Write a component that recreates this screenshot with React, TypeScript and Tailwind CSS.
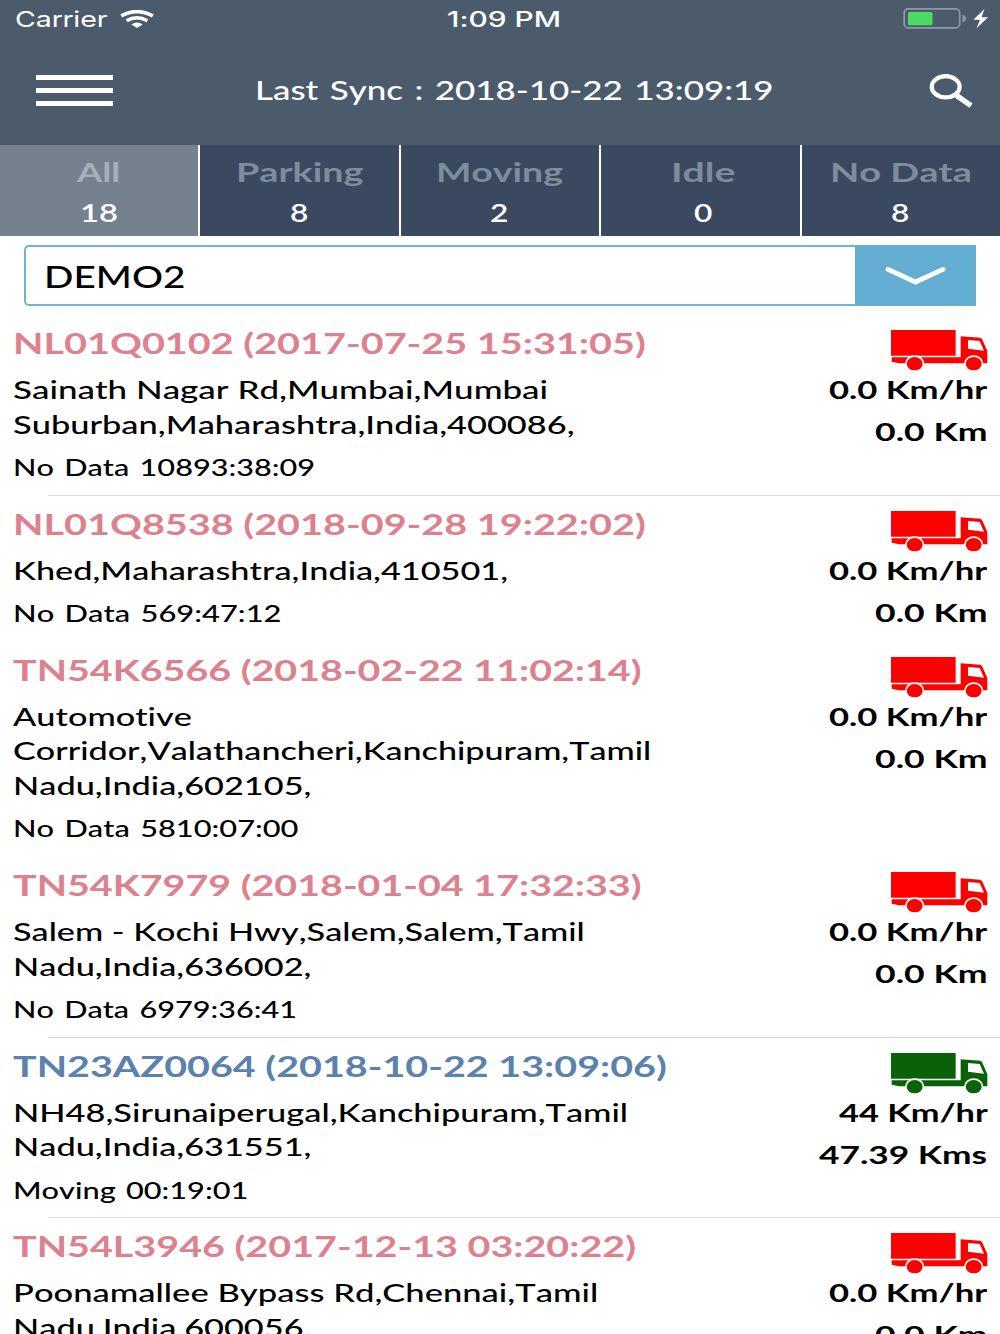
import React, { useLayoutEffect, useRef, useState } from 'react';
import { clsx } from 'clsx';

interface FitTextProps {
  width: number;
  className?: string;
  children: string;
}

interface Line {
  text: string;
  width: number;
}

interface Vehicle {
  title: Line;
  address: Line[];
  status: Line;
  speed: Line;
  distance: Line;
  moving?: boolean;
  divider?: boolean;
}

const tabs = [
  { label: 'All', labelWidth: 44, count: '18', countWidth: 38, active: true },
  { label: 'Parking', labelWidth: 128, count: '8', countWidth: 19 },
  { label: 'Moving', labelWidth: 127, count: '2', countWidth: 19 },
  { label: 'Idle', labelWidth: 65, count: '0', countWidth: 19, nudge: true },
  { label: 'No Data', labelWidth: 142, count: '8', countWidth: 19 },
];

const stopped = {
  speed: { text: '0.0 Km/hr', width: 158 },
  distance: { text: '0.0 Km', width: 112.5 },
};

const vehicles: Vehicle[] = [
  {
    title: { text: 'NL01Q0102 (2017-07-25 15:31:05)', width: 633 },
    address: [
      { text: 'Sainath Nagar Rd,Mumbai,Mumbai', width: 535 },
      { text: 'Suburban,Maharashtra,India,400086,', width: 561 },
    ],
    status: { text: 'No Data 10893:38:09', width: 302.5 },
    divider: true,
    ...stopped,
  },
  {
    title: { text: 'NL01Q8538 (2018-09-28 19:22:02)', width: 633 },
    address: [{ text: 'Khed,Maharashtra,India,410501,', width: 495 }],
    status: { text: 'No Data 569:47:12', width: 268 },
    ...stopped,
  },
  {
    title: { text: 'TN54K6566 (2018-02-22 11:02:14)', width: 629 },
    address: [
      { text: 'Automotive', width: 179.5 },
      { text: 'Corridor,Valathancheri,Kanchipuram,Tamil', width: 637.5 },
      { text: 'Nadu,India,602105,', width: 299 },
    ],
    status: { text: 'No Data 5810:07:00', width: 285.5 },
    ...stopped,
  },
  {
    title: { text: 'TN54K7979 (2018-01-04 17:32:33)', width: 629 },
    address: [
      { text: 'Salem - Kochi Hwy,Salem,Salem,Tamil', width: 571.5 },
      { text: 'Nadu,India,636002,', width: 299 },
    ],
    status: { text: 'No Data 6979:36:41', width: 284 },
    divider: true,
    ...stopped,
  },
  {
    title: { text: 'TN23AZ0064 (2018-10-22 13:09:06)', width: 654 },
    address: [
      { text: 'NH48,Sirunaiperugal,Kanchipuram,Tamil', width: 614.5 },
      { text: 'Nadu,India,631551,', width: 299 },
    ],
    status: { text: 'Moving 00:19:01', width: 235 },
    speed: { text: '44 Km/hr', width: 148.5 },
    distance: { text: '47.39 Kms', width: 168 },
    moving: true,
    divider: true,
  },
  {
    title: { text: 'TN54L3946 (2017-12-13 03:20:22)', width: 623 },
    address: [
      { text: 'Poonamallee Bypass Rd,Chennai,Tamil', width: 584.5 },
      { text: 'Nadu,India,600056,', width: 299 },
    ],
    status: { text: 'No Data 7507:49:07', width: 286 },
    ...stopped,
  },
];

// Stretches a single line of text horizontally to the given width
const FitText: React.FC<FitTextProps> = ({ width, className, children }) => {
  const ref = useRef<HTMLSpanElement>(null);
  const [scale, setScale] = useState(1);

  useLayoutEffect(() => {
    if (ref.current) setScale(width / ref.current.offsetWidth);
  }, [width, children]);

  return (
    <div className={clsx('whitespace-nowrap', className)} style={{ width }}>
      <span
        ref={ref}
        className="inline-block origin-left align-top"
        style={{ transform: `scaleX(${scale})` }}
      >
        {children}
      </span>
    </div>
  );
};

const WifiIcon = () => (
  <svg className="h-[18px] w-[34px]" viewBox="0 0 34 18" fill="none" stroke="white">
    <path d="M1.2 5.9Q17-2.6 32.8 5.9" strokeWidth="3.8" />
    <path d="M6.6 10.8Q17 4.6 27.4 10.8" strokeWidth="3.5" />
    <path d="M11.4 14.4Q17 10.4 22.6 14.4L17 18Z" fill="white" stroke="none" />
  </svg>
);

const BatteryIcon = () => (
  <svg className="h-[22px] w-[86px]" viewBox="0 0 86 22" fill="none">
    <rect x="1.2" y="0.9" width="55.5" height="19" rx="4" stroke="#8e99a5" strokeWidth="1.7" />
    <rect x="5" y="4.1" width="24.5" height="13.2" rx="1.5" fill="#4cd964" />
    <path d="M59.5 6.7Q63 7.7 63 10.5T59.5 14.3Z" fill="#8e99a5" />
    <path d="M81.4 1L70.4 11.8H77L73.5 20.2L85 9.2H78.6Z" fill="white" />
  </svg>
);

const TruckIcon = ({ color }: { color: string }) => (
  <svg className={clsx('-mr-0.5 h-[43px] w-[100px]', color)} viewBox="270 57 300 129" fill="currentColor">
    <path d="M273 60H467V137H273Z" />
    <path d="M275 142H482V79L541 83L546 87L562 123V160H297L275 155Z" />
    <path d="M504 90L539 93L552 122L504 116Z" fill="white" />
    <ellipse cx="344" cy="161" rx="29" ry="25" fill="white" />
    <ellipse cx="344" cy="161" rx="24" ry="20" />
    <ellipse cx="521" cy="161" rx="29" ry="25" fill="white" />
    <ellipse cx="521" cy="161" rx="24" ry="20" />
  </svg>
);

const VehicleRow = ({ vehicle }: { vehicle: Vehicle }) => (
  <li>
    <div className="flex justify-between pt-2.5 pr-[13px] pb-[10.7px] pl-[12.5px]">
      <div>
        <FitText
          width={vehicle.title.width}
          className={clsx(
            'text-[28px] leading-9 font-bold',
            vehicle.moving ? 'text-[#5b82ad]' : 'text-[#dc828e]'
          )}
        >
          {vehicle.title.text}
        </FitText>
        <div className="mt-[11px] mb-[9px]">
          {vehicle.address.map((line) => (
            <FitText key={line.text} width={line.width} className="text-[25px] leading-[34.5px] font-medium">
              {line.text}
            </FitText>
          ))}
        </div>
        <FitText
          width={vehicle.status.width}
          className="text-[23.5px] leading-[34px] font-medium [word-spacing:2px]"
        >
          {vehicle.status.text}
        </FitText>
      </div>

      {/* Speed and distance */}
      <div className="-mb-4 flex flex-col items-end pt-1">
        <div className="-mr-px">
          <TruckIcon color={vehicle.moving ? 'text-[#0a6208]' : 'text-[#fe0000]'} />
        </div>
        <FitText width={vehicle.speed.width} className="text-[25px] leading-[34.5px] font-bold">
          {vehicle.speed.text}
        </FitText>
        <FitText width={vehicle.distance.width} className="mt-[7.5px] text-[25px] leading-[34.5px] font-bold">
          {vehicle.distance.text}
        </FitText>
      </div>
    </div>
    <div className={clsx('ml-12 h-px', vehicle.divider && 'bg-[#d8d8d8]')} />
  </li>
);

export default function App() {
  return (
    <div className="h-[1334px] w-[1000px] overflow-hidden bg-white font-['Lato',sans-serif] text-black [font-kerning:none] [font-variant-ligatures:none]">
      {/* Header */}
      <header className="h-[145px] bg-[#4b5b6c] text-white">
        <div className="grid h-[38px] grid-cols-3 items-center pr-[11px] pl-[15px] font-['Inter',sans-serif]">
          <div className="flex items-center gap-[13px]">
            <FitText width={92} className="text-[22px] leading-[38px]">
              Carrier
            </FitText>
            <WifiIcon />
          </div>
          <FitText width={114} className="ml-1 justify-self-center text-[21.5px] leading-[38px] font-medium">
            1:09 PM
          </FitText>
          <div className="justify-self-end">
            <BatteryIcon />
          </div>
        </div>
        <div className="flex h-[105px] items-center justify-between pr-[27px] pl-9">
          <button className="flex w-[77px] flex-col gap-[7.5px]">
            <span className="h-[5.5px] w-full bg-white" />
            <span className="h-[5.5px] w-full bg-white" />
            <span className="h-[5.5px] w-full bg-white" />
          </button>
          <FitText
            width={518}
            className="-mt-0.5 -ml-3.5 text-[26.5px] leading-9 font-medium [word-spacing:2px]"
          >
            Last Sync : 2018-10-22 13:09:19
          </FitText>
          <button>
            <svg className="h-[34px] w-11" viewBox="0 0 44 34" fill="none" stroke="white">
              <ellipse cx="16.7" cy="12.8" rx="14" ry="10.6" strokeWidth="4.2" />
              <path d="M27.5 21.5L42 31.6" strokeWidth="5.4" />
            </svg>
          </button>
        </div>
      </header>

      {/* Status tabs */}
      <nav className="grid h-[91px] grid-cols-5 gap-0.5">
        {tabs.map((tab) => (
          <button
            key={tab.label}
            className={clsx(
              'flex flex-col items-center pt-[9px]',
              tab.nudge && 'pl-1.5',
              tab.active ? 'bg-[#768190]' : 'bg-[#3a495f]'
            )}
          >
            <FitText
              width={tab.labelWidth}
              className={clsx(
                'text-left text-[26.5px] leading-9 font-bold',
                tab.active ? 'text-[#a3b0ba]' : 'text-[#7d8d9e]'
              )}
            >
              {tab.label}
            </FitText>
            <FitText
              width={tab.countWidth}
              className="mt-1 text-left text-[25px] leading-9 font-semibold text-white"
            >
              {tab.count}
            </FitText>
          </button>
        ))}
      </nav>

      {/* Group select */}
      <div className="px-6 pt-[9px] pb-[9px]">
        <div className="flex h-[61px] w-[951.5px]">
          <div className="flex flex-1 items-center rounded-l-[5px] border-2 border-r-0 border-[#6fb4d3] pl-[18px]">
            <FitText width={142} className="text-[30px] leading-10 font-medium">
              DEMO2
            </FitText>
          </div>
          <button className="flex w-[120.5px] items-center justify-center bg-[#63aed2]">
            <svg className="h-5 w-[62px]" viewBox="0 0 62 20" fill="none" stroke="white" strokeWidth="4.8">
              <path d="M4 3.4L31.5 16L59 3.4" strokeLinecap="round" />
            </svg>
          </button>
        </div>
      </div>

      <ul>
        {vehicles.map((vehicle) => (
          <VehicleRow key={vehicle.title.text} vehicle={vehicle} />
        ))}
      </ul>
    </div>
  );
}
